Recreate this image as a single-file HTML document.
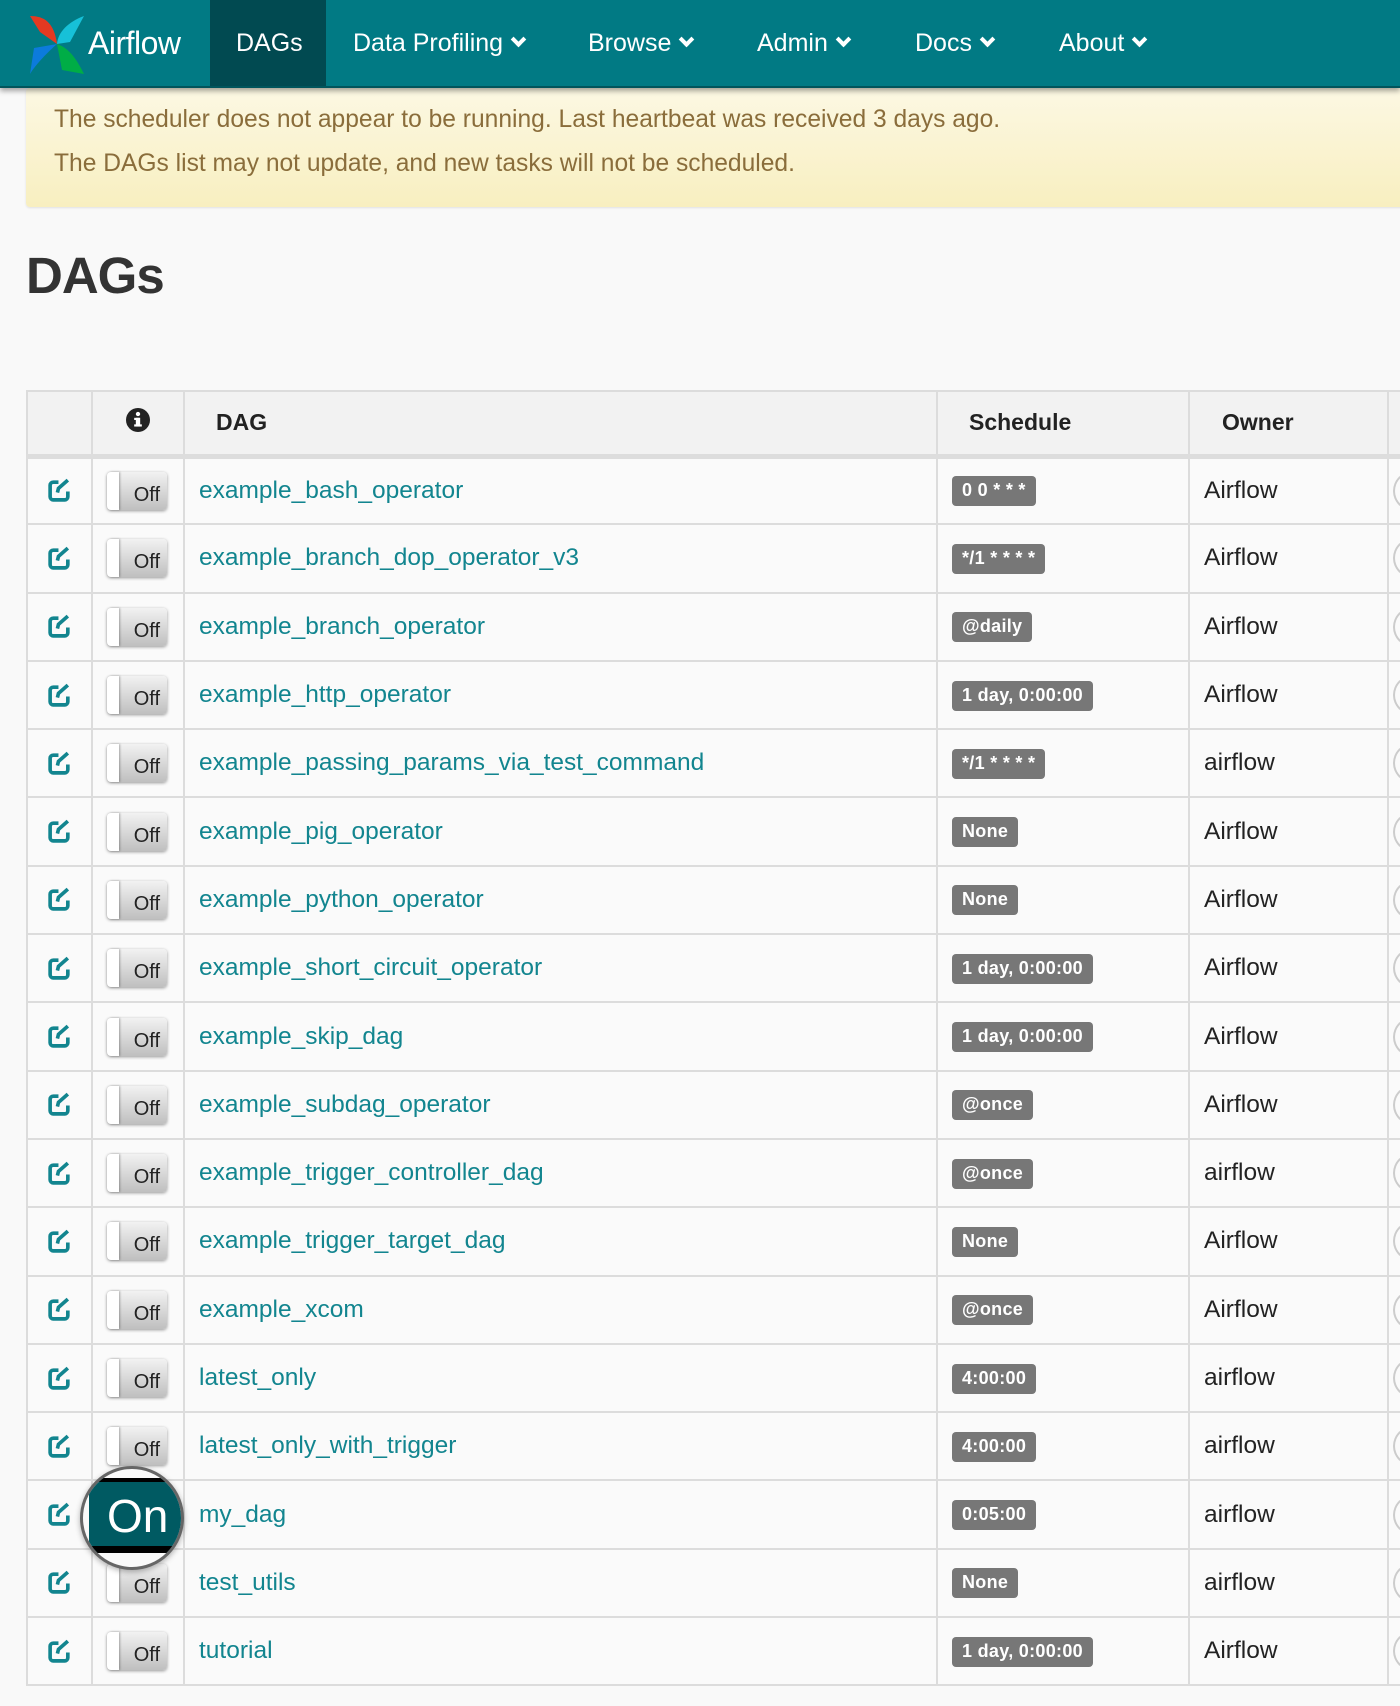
<!DOCTYPE html>
<html><head><meta charset="utf-8"><style>
*{box-sizing:border-box;margin:0;padding:0}
body{width:1400px;height:1706px;overflow:hidden;background:#f9f9f9;font-family:"Liberation Sans",Arial,sans-serif;position:relative}
.nav{position:absolute;left:0;top:0;width:1400px;height:88px;background:#017a84;border-bottom:2px solid #01555c;box-shadow:0 3px 5px rgba(0,0,0,.35);z-index:5}
.nav .brand{position:absolute;left:26px;top:14px;width:170px;height:60px}
.nav .brand span{position:absolute;left:62px;top:11px;color:#fff;font-size:32px;letter-spacing:-0.5px}
.nav .act{position:absolute;left:210px;top:0;width:116px;height:86px;background:#014a51}
.nav .it{position:absolute;top:29px;color:#fff;font-size:25px}
.chev{display:inline-block;width:11px;height:11px;border-right:4px solid #fff;border-bottom:4px solid #fff;transform:rotate(45deg);margin-left:10px;position:relative;top:-6px}
.alert{position:absolute;left:26px;top:88px;width:1400px;height:119px;background:linear-gradient(#fcf8e3,#f8efc0);border-radius:4px;color:#8a6d3b;font-size:24.6px;box-shadow:0 1px 2px rgba(0,0,0,.1)}
.alert p{position:absolute;left:28px}
h1{position:absolute;left:26px;top:246px;font-size:51px;font-weight:bold;color:#333;letter-spacing:-1px}
table{position:absolute;left:26px;top:390px;border-collapse:collapse;table-layout:fixed;width:1420px;background:#fafafa}
td,th{border:2px solid #dcdcdc;vertical-align:middle}
th{height:65px;background:#f2f2f2;font-size:23px;text-align:left;color:#222;border-bottom:5px solid #ddd}
td{height:68.3px;font-size:24.5px}
.lnk{color:#12858f;padding-left:14px}
.own{color:#222;padding-left:14px}
.lab{display:inline-block;margin-left:14px;background:#777;color:#fff;font-weight:bold;font-size:18px;padding:4px 10px 5px;border-radius:4px;letter-spacing:.3px}
.tg{display:inline-block;margin-left:14px;width:60px;height:38px;border-radius:4px;background:linear-gradient(#f2f2f2,#bfbfbf);box-shadow:0 1px 3px rgba(0,0,0,.4);position:relative;font-size:20px;color:#222;vertical-align:middle}
.tg:before{content:"";position:absolute;left:0;top:0;width:12px;height:38px;background:#fff;border-radius:4px 0 0 4px;box-shadow:1px 0 2px rgba(0,0,0,.3)}
.tg span{position:absolute;right:7px;top:12px}
.ed{display:block;margin:0 auto}
.circ{display:inline-block;width:20px;height:40px;border:2px solid #ccc;border-right:none;border-radius:20px 0 0 20px;margin-left:4px;vertical-align:middle}
.mag{position:absolute;left:80px;top:1466px;width:104px;height:104px;border-radius:50%;border:3px solid #666;overflow:hidden;background:#fafafa;z-index:4;box-shadow:0 2px 6px rgba(0,0,0,.3)}
.mag div{position:absolute;left:6px;top:9px;width:110px;height:75px;background:#005a62;border-top:4px solid #000;border-bottom:7px solid #000}
.mag span{position:absolute;left:18px;top:11px;color:#fff;font-size:46px;line-height:1}
</style></head><body>
<div class="nav">
 <div class="brand"><svg width="62" height="62" viewBox="0 0 62 62"><path d="M4 2 C18 2 28 8 31 30 L14 18 Z" fill="#e43921"/><path d="M31 30 C32 18 42 8 58 2 L44 28 Z" fill="#17c1d8"/><path d="M31 30 C44 34 52 48 58 60 L36 56 Z" fill="#00ad46"/><path d="M31 30 C22 38 10 50 4 60 L8 34 Z" fill="#0c7bdc"/></svg><span>Airflow</span></div>
 <div class="act"></div>
 <div class="it" style="left:236px">DAGs</div>
 <div class="it" style="left:353px">Data Profiling<i class="chev"></i></div>
 <div class="it" style="left:588px">Browse<i class="chev"></i></div>
 <div class="it" style="left:757px">Admin<i class="chev"></i></div>
 <div class="it" style="left:915px">Docs<i class="chev"></i></div>
 <div class="it" style="left:1059px">About<i class="chev"></i></div>
</div>
<div class="alert"><p style="top:18px">The scheduler does not appear to be running. Last heartbeat was received 3 days ago.</p><p style="top:62px">The DAGs list may not update, and new tasks will not be scheduled.</p></div>
<h1>DAGs</h1>
<table>
<colgroup><col style="width:65px"><col style="width:92px"><col style="width:753px"><col style="width:252px"><col style="width:199px"><col></colgroup>
<tr><th></th><th style="text-align:center"><svg width="24" height="24" viewBox="0 0 22 22"><circle cx="11" cy="11" r="11" fill="#222"/><rect x="9" y="9" width="4" height="8" fill="#fff"/><rect x="7.5" y="9" width="5" height="2" fill="#fff"/><rect x="7.5" y="15" width="7" height="2" fill="#fff"/><circle cx="11" cy="5.5" r="2" fill="#fff"/></svg></th><th style="padding-left:31px">DAG</th><th style="padding-left:31px">Schedule</th><th style="padding-left:32px">Owner</th><th></th></tr>
<tr><td><svg class="ed" width="25" height="25" viewBox="0 0 24 24"><path d="M11 4H6a3 3 0 0 0-3 3v11a3 3 0 0 0 3 3h11a3 3 0 0 0 3-3v-5" fill="none" stroke="#12858f" stroke-width="3.5"/><path d="M10 14l1-4 9-8" fill="none" stroke="#12858f" stroke-width="3.5"/></svg></td><td><span class="tg"><span>Off</span></span></td><td class="lnk">example_bash_operator</td><td><span class="lab">0 0 * * *</span></td><td class="own">Airflow</td><td><span class="circ"></span></td></tr>
<tr><td><svg class="ed" width="25" height="25" viewBox="0 0 24 24"><path d="M11 4H6a3 3 0 0 0-3 3v11a3 3 0 0 0 3 3h11a3 3 0 0 0 3-3v-5" fill="none" stroke="#12858f" stroke-width="3.5"/><path d="M10 14l1-4 9-8" fill="none" stroke="#12858f" stroke-width="3.5"/></svg></td><td><span class="tg"><span>Off</span></span></td><td class="lnk">example_branch_dop_operator_v3</td><td><span class="lab">*/1 * * * *</span></td><td class="own">Airflow</td><td><span class="circ"></span></td></tr>
<tr><td><svg class="ed" width="25" height="25" viewBox="0 0 24 24"><path d="M11 4H6a3 3 0 0 0-3 3v11a3 3 0 0 0 3 3h11a3 3 0 0 0 3-3v-5" fill="none" stroke="#12858f" stroke-width="3.5"/><path d="M10 14l1-4 9-8" fill="none" stroke="#12858f" stroke-width="3.5"/></svg></td><td><span class="tg"><span>Off</span></span></td><td class="lnk">example_branch_operator</td><td><span class="lab">@daily</span></td><td class="own">Airflow</td><td><span class="circ"></span></td></tr>
<tr><td><svg class="ed" width="25" height="25" viewBox="0 0 24 24"><path d="M11 4H6a3 3 0 0 0-3 3v11a3 3 0 0 0 3 3h11a3 3 0 0 0 3-3v-5" fill="none" stroke="#12858f" stroke-width="3.5"/><path d="M10 14l1-4 9-8" fill="none" stroke="#12858f" stroke-width="3.5"/></svg></td><td><span class="tg"><span>Off</span></span></td><td class="lnk">example_http_operator</td><td><span class="lab">1 day, 0:00:00</span></td><td class="own">Airflow</td><td><span class="circ"></span></td></tr>
<tr><td><svg class="ed" width="25" height="25" viewBox="0 0 24 24"><path d="M11 4H6a3 3 0 0 0-3 3v11a3 3 0 0 0 3 3h11a3 3 0 0 0 3-3v-5" fill="none" stroke="#12858f" stroke-width="3.5"/><path d="M10 14l1-4 9-8" fill="none" stroke="#12858f" stroke-width="3.5"/></svg></td><td><span class="tg"><span>Off</span></span></td><td class="lnk">example_passing_params_via_test_command</td><td><span class="lab">*/1 * * * *</span></td><td class="own">airflow</td><td><span class="circ"></span></td></tr>
<tr><td><svg class="ed" width="25" height="25" viewBox="0 0 24 24"><path d="M11 4H6a3 3 0 0 0-3 3v11a3 3 0 0 0 3 3h11a3 3 0 0 0 3-3v-5" fill="none" stroke="#12858f" stroke-width="3.5"/><path d="M10 14l1-4 9-8" fill="none" stroke="#12858f" stroke-width="3.5"/></svg></td><td><span class="tg"><span>Off</span></span></td><td class="lnk">example_pig_operator</td><td><span class="lab">None</span></td><td class="own">Airflow</td><td><span class="circ"></span></td></tr>
<tr><td><svg class="ed" width="25" height="25" viewBox="0 0 24 24"><path d="M11 4H6a3 3 0 0 0-3 3v11a3 3 0 0 0 3 3h11a3 3 0 0 0 3-3v-5" fill="none" stroke="#12858f" stroke-width="3.5"/><path d="M10 14l1-4 9-8" fill="none" stroke="#12858f" stroke-width="3.5"/></svg></td><td><span class="tg"><span>Off</span></span></td><td class="lnk">example_python_operator</td><td><span class="lab">None</span></td><td class="own">Airflow</td><td><span class="circ"></span></td></tr>
<tr><td><svg class="ed" width="25" height="25" viewBox="0 0 24 24"><path d="M11 4H6a3 3 0 0 0-3 3v11a3 3 0 0 0 3 3h11a3 3 0 0 0 3-3v-5" fill="none" stroke="#12858f" stroke-width="3.5"/><path d="M10 14l1-4 9-8" fill="none" stroke="#12858f" stroke-width="3.5"/></svg></td><td><span class="tg"><span>Off</span></span></td><td class="lnk">example_short_circuit_operator</td><td><span class="lab">1 day, 0:00:00</span></td><td class="own">Airflow</td><td><span class="circ"></span></td></tr>
<tr><td><svg class="ed" width="25" height="25" viewBox="0 0 24 24"><path d="M11 4H6a3 3 0 0 0-3 3v11a3 3 0 0 0 3 3h11a3 3 0 0 0 3-3v-5" fill="none" stroke="#12858f" stroke-width="3.5"/><path d="M10 14l1-4 9-8" fill="none" stroke="#12858f" stroke-width="3.5"/></svg></td><td><span class="tg"><span>Off</span></span></td><td class="lnk">example_skip_dag</td><td><span class="lab">1 day, 0:00:00</span></td><td class="own">Airflow</td><td><span class="circ"></span></td></tr>
<tr><td><svg class="ed" width="25" height="25" viewBox="0 0 24 24"><path d="M11 4H6a3 3 0 0 0-3 3v11a3 3 0 0 0 3 3h11a3 3 0 0 0 3-3v-5" fill="none" stroke="#12858f" stroke-width="3.5"/><path d="M10 14l1-4 9-8" fill="none" stroke="#12858f" stroke-width="3.5"/></svg></td><td><span class="tg"><span>Off</span></span></td><td class="lnk">example_subdag_operator</td><td><span class="lab">@once</span></td><td class="own">Airflow</td><td><span class="circ"></span></td></tr>
<tr><td><svg class="ed" width="25" height="25" viewBox="0 0 24 24"><path d="M11 4H6a3 3 0 0 0-3 3v11a3 3 0 0 0 3 3h11a3 3 0 0 0 3-3v-5" fill="none" stroke="#12858f" stroke-width="3.5"/><path d="M10 14l1-4 9-8" fill="none" stroke="#12858f" stroke-width="3.5"/></svg></td><td><span class="tg"><span>Off</span></span></td><td class="lnk">example_trigger_controller_dag</td><td><span class="lab">@once</span></td><td class="own">airflow</td><td><span class="circ"></span></td></tr>
<tr><td><svg class="ed" width="25" height="25" viewBox="0 0 24 24"><path d="M11 4H6a3 3 0 0 0-3 3v11a3 3 0 0 0 3 3h11a3 3 0 0 0 3-3v-5" fill="none" stroke="#12858f" stroke-width="3.5"/><path d="M10 14l1-4 9-8" fill="none" stroke="#12858f" stroke-width="3.5"/></svg></td><td><span class="tg"><span>Off</span></span></td><td class="lnk">example_trigger_target_dag</td><td><span class="lab">None</span></td><td class="own">Airflow</td><td><span class="circ"></span></td></tr>
<tr><td><svg class="ed" width="25" height="25" viewBox="0 0 24 24"><path d="M11 4H6a3 3 0 0 0-3 3v11a3 3 0 0 0 3 3h11a3 3 0 0 0 3-3v-5" fill="none" stroke="#12858f" stroke-width="3.5"/><path d="M10 14l1-4 9-8" fill="none" stroke="#12858f" stroke-width="3.5"/></svg></td><td><span class="tg"><span>Off</span></span></td><td class="lnk">example_xcom</td><td><span class="lab">@once</span></td><td class="own">Airflow</td><td><span class="circ"></span></td></tr>
<tr><td><svg class="ed" width="25" height="25" viewBox="0 0 24 24"><path d="M11 4H6a3 3 0 0 0-3 3v11a3 3 0 0 0 3 3h11a3 3 0 0 0 3-3v-5" fill="none" stroke="#12858f" stroke-width="3.5"/><path d="M10 14l1-4 9-8" fill="none" stroke="#12858f" stroke-width="3.5"/></svg></td><td><span class="tg"><span>Off</span></span></td><td class="lnk">latest_only</td><td><span class="lab">4:00:00</span></td><td class="own">airflow</td><td><span class="circ"></span></td></tr>
<tr><td><svg class="ed" width="25" height="25" viewBox="0 0 24 24"><path d="M11 4H6a3 3 0 0 0-3 3v11a3 3 0 0 0 3 3h11a3 3 0 0 0 3-3v-5" fill="none" stroke="#12858f" stroke-width="3.5"/><path d="M10 14l1-4 9-8" fill="none" stroke="#12858f" stroke-width="3.5"/></svg></td><td><span class="tg"><span>Off</span></span></td><td class="lnk">latest_only_with_trigger</td><td><span class="lab">4:00:00</span></td><td class="own">airflow</td><td><span class="circ"></span></td></tr>
<tr><td><svg class="ed" width="25" height="25" viewBox="0 0 24 24"><path d="M11 4H6a3 3 0 0 0-3 3v11a3 3 0 0 0 3 3h11a3 3 0 0 0 3-3v-5" fill="none" stroke="#12858f" stroke-width="3.5"/><path d="M10 14l1-4 9-8" fill="none" stroke="#12858f" stroke-width="3.5"/></svg></td><td></td><td class="lnk">my_dag</td><td><span class="lab">0:05:00</span></td><td class="own">airflow</td><td><span class="circ"></span></td></tr>
<tr><td><svg class="ed" width="25" height="25" viewBox="0 0 24 24"><path d="M11 4H6a3 3 0 0 0-3 3v11a3 3 0 0 0 3 3h11a3 3 0 0 0 3-3v-5" fill="none" stroke="#12858f" stroke-width="3.5"/><path d="M10 14l1-4 9-8" fill="none" stroke="#12858f" stroke-width="3.5"/></svg></td><td><span class="tg"><span>Off</span></span></td><td class="lnk">test_utils</td><td><span class="lab">None</span></td><td class="own">airflow</td><td><span class="circ"></span></td></tr>
<tr><td><svg class="ed" width="25" height="25" viewBox="0 0 24 24"><path d="M11 4H6a3 3 0 0 0-3 3v11a3 3 0 0 0 3 3h11a3 3 0 0 0 3-3v-5" fill="none" stroke="#12858f" stroke-width="3.5"/><path d="M10 14l1-4 9-8" fill="none" stroke="#12858f" stroke-width="3.5"/></svg></td><td><span class="tg"><span>Off</span></span></td><td class="lnk">tutorial</td><td><span class="lab">1 day, 0:00:00</span></td><td class="own">Airflow</td><td><span class="circ"></span></td></tr>
</table>
<div class="mag"><div><span>On</span></div></div>
</body></html>
